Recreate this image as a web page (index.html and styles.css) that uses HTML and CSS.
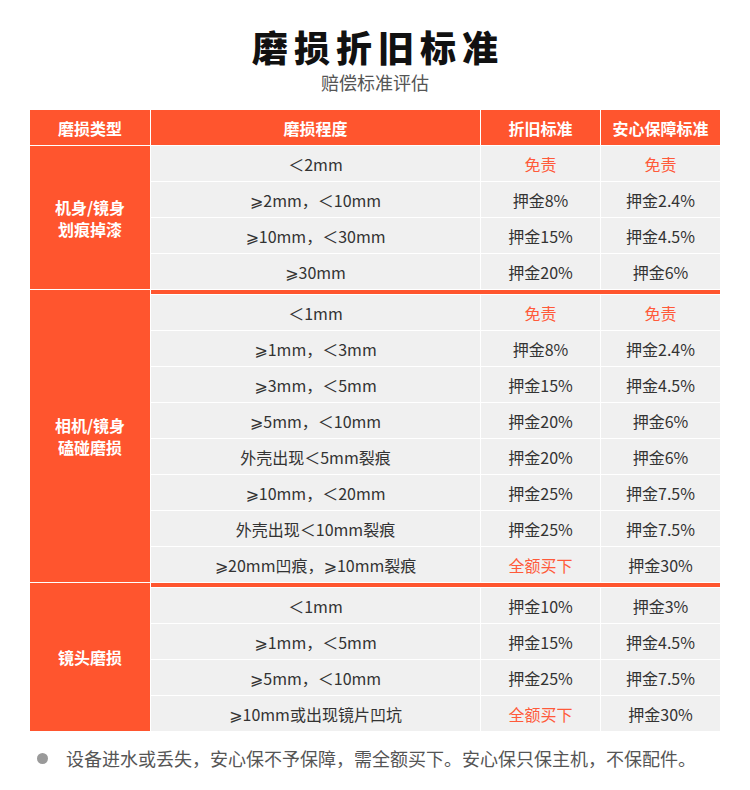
FILE: index.html
```html
<!DOCTYPE html>
<html lang="zh-CN">
<head>
<meta charset="utf-8">
<title>磨损折旧标准</title>
<link rel="stylesheet" href="styles.css">
</head>
<body>
<div class="page">
  <header class="head">
    <h1 class="title">磨损折旧标准</h1>
    <p class="subtitle">赔偿标准评估</p>
  </header>

  <div class="table">
    <div class="thead">
      <div class="th">磨损类型</div>
      <div class="th">磨损程度</div>
      <div class="th">折旧标准</div>
      <div class="th">安心保障标准</div>
    </div>

    <div class="group g4">
      <div class="type"><span>机身/镜身</span><span>划痕掉漆</span></div>
      <div class="td">＜2mm</div><div class="td red">免责</div><div class="td red">免责</div>
      <div class="td">⩾2mm，＜10mm</div><div class="td">押金8%</div><div class="td">押金2.4%</div>
      <div class="td">⩾10mm，＜30mm</div><div class="td">押金15%</div><div class="td">押金4.5%</div>
      <div class="td">⩾30mm</div><div class="td">押金20%</div><div class="td">押金6%</div>
    </div>

    <div class="group g8 banded">
      <div class="type"><span>相机/镜身</span><span>磕碰磨损</span></div>
      <div class="band"></div>
      <div class="td">＜1mm</div><div class="td red">免责</div><div class="td red">免责</div>
      <div class="td">⩾1mm，＜3mm</div><div class="td">押金8%</div><div class="td">押金2.4%</div>
      <div class="td">⩾3mm，＜5mm</div><div class="td">押金15%</div><div class="td">押金4.5%</div>
      <div class="td">⩾5mm，＜10mm</div><div class="td">押金20%</div><div class="td">押金6%</div>
      <div class="td">外壳出现＜5mm裂痕</div><div class="td">押金20%</div><div class="td">押金6%</div>
      <div class="td">⩾10mm，＜20mm</div><div class="td">押金25%</div><div class="td">押金7.5%</div>
      <div class="td">外壳出现＜10mm裂痕</div><div class="td">押金25%</div><div class="td">押金7.5%</div>
      <div class="td">⩾20mm凹痕，⩾10mm裂痕</div><div class="td red">全额买下</div><div class="td">押金30%</div>
    </div>

    <div class="group g4 banded">
      <div class="type"><span>镜头磨损</span></div>
      <div class="band"></div>
      <div class="td">＜1mm</div><div class="td">押金10%</div><div class="td">押金3%</div>
      <div class="td">⩾1mm，＜5mm</div><div class="td">押金15%</div><div class="td">押金4.5%</div>
      <div class="td">⩾5mm，＜10mm</div><div class="td">押金25%</div><div class="td">押金7.5%</div>
      <div class="td">⩾10mm或出现镜片凹坑</div><div class="td red">全额买下</div><div class="td">押金30%</div>
    </div>
  </div>

  <p class="note"><span class="dot"></span>设备进水或丢失，安心保不予保障，需全额买下。安心保只保主机，不保配件。</p>
</div>
</body>
</html>
```

FILE: styles.css
```css
* { box-sizing: border-box; }
html, body { margin: 0; padding: 0; background: #fff; }
body {
  font-family: "Noto Sans CJK SC", "Noto Sans", "DejaVu Sans", sans-serif;
  color: #333;
}
.page { width: 750px; padding-top: 24px; }
.head { text-align: center; }
.title {
  margin: 0;
  font-size: 36px;
  line-height: 44px;
  font-weight: 900;
  color: #111;
  letter-spacing: 6px;
  padding-left: 6px;
}
.subtitle {
  margin: 2px 0 0;
  font-size: 18px;
  line-height: 24px;
  color: #555;
  font-weight: 400;
}
.table {
  width: 690px;
  margin: 16px auto 0;
  background: #fff;
  display: flex;
  flex-direction: column;
  gap: 1px;
}
.thead, .group {
  display: grid;
  grid-template-columns: 120px 329px 119px 119px;
  column-gap: 1px;
  row-gap: 1px;
}
.thead { height: 35px; }
.th {
  background: #ff552e;
  color: #fff;
  font-weight: 700;
  font-size: 16px;
  display: flex;
  align-items: center;
  justify-content: center;
}
.g4 { grid-template-rows: repeat(4, 35px); }
.g8 { grid-template-rows: repeat(8, 35px); }
.g4.banded { grid-template-rows: 4px repeat(4, 35px); }
.g8.banded { grid-template-rows: 4px repeat(8, 35px); }
.type {
  grid-column: 1;
  grid-row: 1 / -1;
  background: #ff552e;
  color: #fff;
  font-weight: 700;
  font-size: 16px;
  line-height: 22px;
  display: flex;
  flex-direction: column;
  align-items: center;
  justify-content: center;
  text-align: center;
}
.band {
  grid-column: 2 / 5;
  grid-row: 1;
  background: #ff552e;
}
.td {
  background: #f0f0f0;
  font-size: 16px;
  color: #333;
  display: flex;
  align-items: center;
  justify-content: center;
  white-space: nowrap;
}
.td.red { color: #ff5a3a; }
.note {
  margin: 14px 0 0;
  padding-left: 37px;
  font-size: 18px;
  line-height: 26px;
  color: #555;
  display: flex;
  align-items: center;
}
.dot {
  width: 11px;
  height: 11px;
  border-radius: 50%;
  background: #9a9a9a;
  margin-right: 18px;
  flex: none;
}
```
